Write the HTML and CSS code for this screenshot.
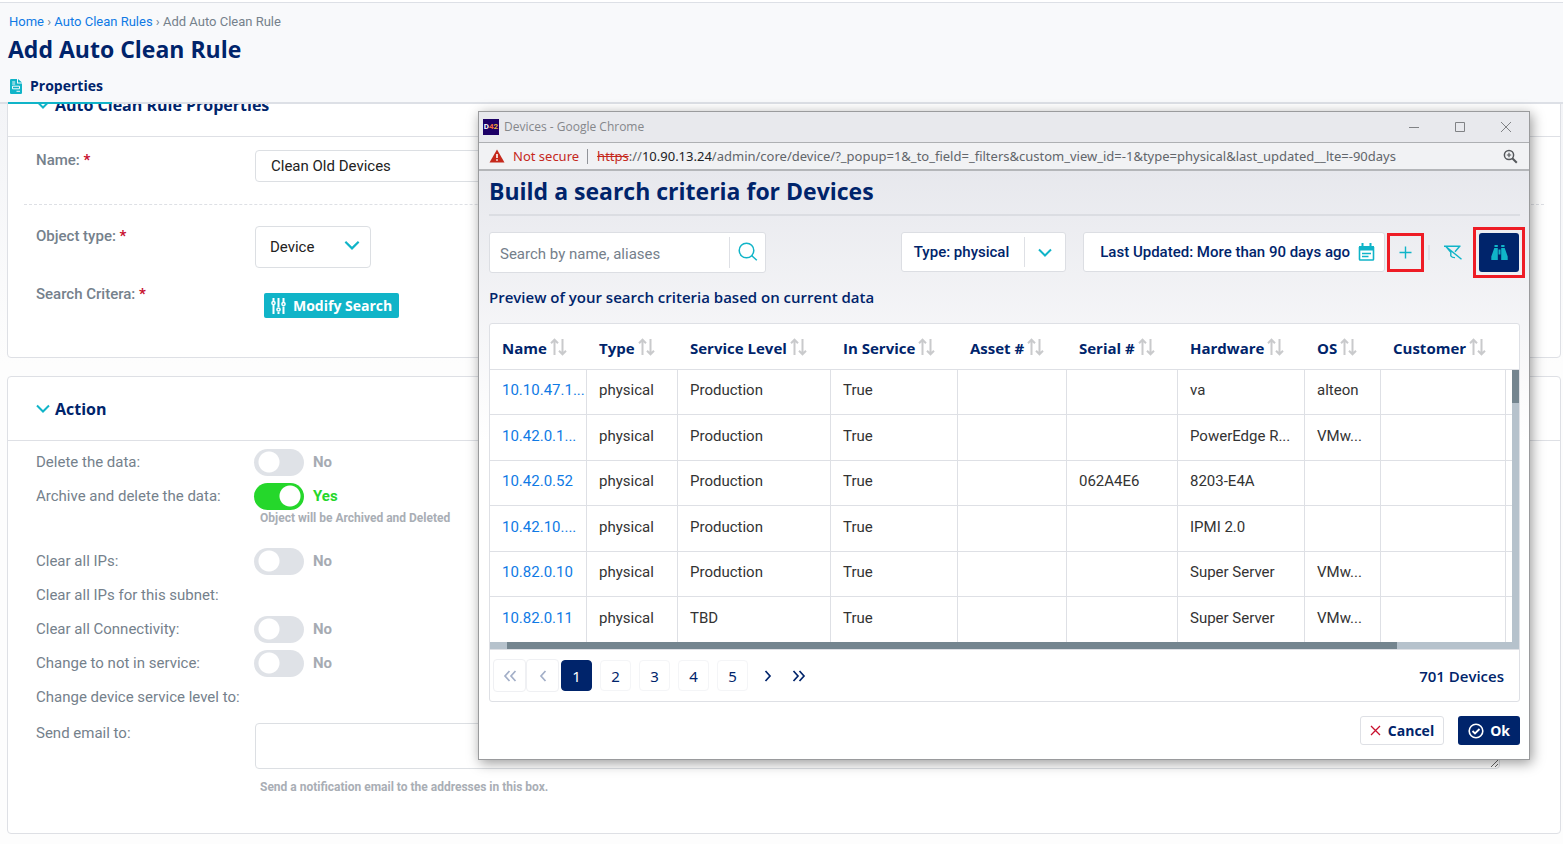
FILE: index.html
```html
<!DOCTYPE html>
<html lang="en">
<head>
<meta charset="utf-8">
<title>Add Auto Clean Rule</title>
<link rel="stylesheet" href="styles.css">
</head>
<body>
<svg class="sprite" aria-hidden="true">
  <symbol id="sort" viewBox="0 0 18 18"><path d="M4.500 17V2M1 5.200l3.500-3.500L8 5.200M12.500 1v15M9 12.800l3.500 3.500 3.500-3.500" fill="none" stroke="currentColor" stroke-width="2"/></symbol>
  <symbol id="chev" viewBox="0 0 14 9"><path d="M1 1.500l6 6 6-6" fill="none" stroke="currentColor" stroke-width="2"/></symbol>
</svg>
<header class="top">
  <nav class="crumbs"><a href="#">Home</a> › <a href="#">Auto Clean Rules</a> › Add Auto Clean Rule</nav>
  <h1>Add Auto Clean Rule</h1>
  <a class="tab" href="#">
    <svg width="12" height="15" viewBox="0 0 12 15"><path d="M1.200 0H7v4.500h5V14q0 1-1.200 1H1.200Q0 15 0 14V1q0-1 1.200-1zM8 0l4 3.600H8z" fill="#10b4c8"/><path d="M2.200 3h3M2.200 5h3M2.500 7.200h7v2.600h-7zM6.500 12.300h3.500" fill="none" stroke="#f8f9fb"/></svg>
    Properties</a>
</header>
<main class="page">
  <section class="card first">
    <h2><svg class="chev" width="14" height="9"><use href="#chev"/></svg>Auto Clean Rule Properties</h2>
    <div class="props">
      <div class="field name">
        <label class="strong" for="name">Name: <b>*</b></label>
        <input id="name" class="box" type="text" value="Clean Old Devices">
      </div>
      <div class="field object">
        <label class="strong" for="otype">Object type: <b>*</b></label>
        <div class="select"><select id="otype" class="box"><option>Device</option></select><svg class="chev" width="16" height="10" viewBox="0 0 14 9"><use href="#chev"/></svg></div>
      </div>
      <div class="field search">
        <span class="strong">Search Critera: <b>*</b></span>
        <button class="modify" type="button"><svg width="15" height="16" viewBox="0 0 15 16" fill="none" stroke="#fff" stroke-width="2"><path d="M2.500 0v3M2.500 7v9M7.500 0v9M7.500 14v2M12.500 0v4M12.500 8.500V16"/><circle cx="2.500" cy="5" r="1.600" stroke-width="1.500"/><circle cx="7.500" cy="11.500" r="1.600" stroke-width="1.500"/><circle cx="12.500" cy="6" r="1.600" stroke-width="1.500"/></svg>Modify Search</button>
      </div>
    </div>
  </section>
  <section class="card">
    <h2><svg class="chev" width="14" height="9"><use href="#chev"/></svg>Action</h2>
    <div class="actions">
      <div class="row"><label for="a1">Delete the data:</label><span class="switch"><input type="checkbox" id="a1">No</span></div>
      <div class="row"><label for="a2">Archive and delete the data:</label><span class="switch on"><input type="checkbox" id="a2" checked>Yes</span></div>
      <p class="help near">Object will be Archived and Deleted</p>
      <div class="row"><label for="a3">Clear all IPs:</label><span class="switch"><input type="checkbox" id="a3">No</span></div>
      <div class="row"><span>Clear all IPs for this subnet:</span></div>
      <div class="row"><label for="a4">Clear all Connectivity:</label><span class="switch"><input type="checkbox" id="a4">No</span></div>
      <div class="row"><label for="a5">Change to not in service:</label><span class="switch"><input type="checkbox" id="a5">No</span></div>
      <div class="row"><span>Change device service level to:</span></div>
      <div class="row mail"><label for="mail">Send email to:</label><textarea id="mail" class="box"></textarea></div>
      <p class="help">Send a notification email to the addresses in this box.</p>
    </div>
  </section>
</main>

<section class="popup" aria-label="Devices">
  <div class="titlebar">
    <span class="fav">D<i>4</i><em>2</em></span>
    <span class="wname">Devices - Google Chrome</span>
    <button type="button" aria-label="Minimize"><svg width="12" height="12" viewBox="0 0 12 12"><path d="M1 6.500h10"/></svg></button>
    <button type="button" aria-label="Maximize"><svg width="12" height="12" viewBox="0 0 12 12"><path d="M1.500 1.500h9v9h-9z"/></svg></button>
    <button type="button" aria-label="Close"><svg width="12" height="12" viewBox="0 0 12 12"><path d="M1 1l10 10M11 1L1 11"/></svg></button>
  </div>
  <div class="urlbar">
    <svg width="16" height="14" viewBox="0 0 16 14"><path d="M8 0.500L15.500 13.500H0.500z" fill="#c5291c"/><path d="M8 5v4M8 10.200v1.600" stroke="#fff" stroke-width="1.600"/></svg>
    <span class="insecure">Not secure</span>
    <span class="url"><s>https</s>://<b>10.90.13.24</b>/admin/core/device/?_popup=1&amp;_to_field=_filters&amp;custom_view_id=-1&amp;type=physical&amp;last_updated__lte=-90days</span>
    <svg width="15" height="15" viewBox="0 0 15 15" fill="none" stroke="#55585c"><circle cx="6" cy="6" r="4.600" stroke-width="1.500"/><path d="M9.300 9.300l4.500 4.500" stroke-width="2"/><path d="M3.800 6h4.400M6 3.800v4.400" stroke-width="1.200"/></svg>
  </div>
  <div class="content">
    <h1>Build a search criteria for Devices</h1>
    <div class="tools">
      <div class="finder">
        <input type="text" aria-label="Search" placeholder="Search by name, aliases">
        <button type="button" aria-label="Search"><svg width="20" height="20" viewBox="0 0 20 20" fill="none" stroke="#10b4c8" stroke-width="1.500"><circle cx="8.500" cy="8.500" r="7.300"/><path d="M13.800 13.800l5 4.500"/></svg></button>
      </div>
      <button class="filter type" type="button"><span>Type: physical</span><svg class="chev" width="14" height="9"><use href="#chev"/></svg></button>
      <button class="filter" type="button">Last Updated: More than 90 days ago
        <svg width="17" height="18" viewBox="0 0 17 18"><path d="M1 3h15v4.500H1z" fill="#10b4c8"/><path d="M4.500 0v4M12.500 0v4" stroke="#10b4c8" stroke-width="2"/><path d="M1.500 4v12.200q0 .8.800.8h12.400q.8 0 .8-.8V4M4 10.500h9M4 13.500h6.500" fill="none" stroke="#10b4c8" stroke-width="1.600"/></svg></button>
      <button class="plain mark" type="button" aria-label="Add filter"><svg width="13" height="13" viewBox="0 0 13 13"><path d="M6.500 0.500v12M0.500 6.500h12" stroke="#10b4c8" stroke-width="1.400"/></svg></button>
      <span class="sep"></span>
      <button class="plain clear" type="button" aria-label="Clear filters"><svg width="18" height="15" viewBox="0 0 18 15" fill="none" stroke="#10b4c8" stroke-width="1.400"><path d="M0 1.200h16.500M2 1.500l4.800 5.700v3.600q1.500 2 4.200 1.800M15.500 1.500l-4.500 5.300M1.500 1.200l16 13"/></svg></button>
      <span class="mark go"><button type="button" aria-label="Run search"><svg width="17" height="15" viewBox="0 0 17 15" fill="#10b4c8"><path d="M3.500 0h3.300v2H3.500zM10.200 0h3.300v2h-3.300zM3.300 3h3.500v12H0.300v-3.500zM13.700 3h-3.500v12h6.500v-3.500zM7.500 4.500h2v5h-2z"/></svg></button></span>
    </div>
    <h3>Preview of your search criteria based on current data</h3>
    <div class="panel">
      <div class="grid">
        <table>
          <colgroup><col class="c97"><col class="c91"><col class="c153"><col class="c127"><col class="c109"><col class="c111"><col class="c127"><col class="c76"><col><col class="c6"></colgroup>
          <thead><tr><th>Name<svg class="sort"><use href="#sort"/></svg></th><th>Type<svg class="sort"><use href="#sort"/></svg></th><th>Service Level<svg class="sort"><use href="#sort"/></svg></th><th>In Service<svg class="sort"><use href="#sort"/></svg></th><th>Asset #<svg class="sort"><use href="#sort"/></svg></th><th>Serial #<svg class="sort"><use href="#sort"/></svg></th><th>Hardware<svg class="sort"><use href="#sort"/></svg></th><th>OS<svg class="sort"><use href="#sort"/></svg></th><th>Customer<svg class="sort"><use href="#sort"/></svg></th><th></th></tr></thead>
          <tbody>
            <tr><td><a href="#">10.10.47.1...</a></td><td>physical</td><td>Production</td><td>True</td><td></td><td></td><td>va</td><td>alteon</td><td></td><td></td></tr>
            <tr><td><a href="#">10.42.0.1...</a></td><td>physical</td><td>Production</td><td>True</td><td></td><td></td><td>PowerEdge R...</td><td>VMw...</td><td></td><td></td></tr>
            <tr><td><a href="#">10.42.0.52</a></td><td>physical</td><td>Production</td><td>True</td><td></td><td>062A4E6</td><td>8203-E4A</td><td></td><td></td><td></td></tr>
            <tr><td><a href="#">10.42.10....</a></td><td>physical</td><td>Production</td><td>True</td><td></td><td></td><td>IPMI 2.0</td><td></td><td></td><td></td></tr>
            <tr><td><a href="#">10.82.0.10</a></td><td>physical</td><td>Production</td><td>True</td><td></td><td></td><td>Super Server</td><td>VMw...</td><td></td><td></td></tr>
            <tr><td><a href="#">10.82.0.11</a></td><td>physical</td><td>TBD</td><td>True</td><td></td><td></td><td>Super Server</td><td>VMw...</td><td></td><td></td></tr>
          </tbody>
        </table>
        <div class="vbar"><div class="vtrack"><div class="vthumb"></div></div></div>
      </div>
      <div class="hbar"><div class="hthumb"></div></div>
      <div class="pager">
        <button class="off" type="button" aria-label="First page"><svg width="14" height="12" viewBox="0 0 14 12"><path d="M6.500 1L2 6l4.500 5M12.500 1L8 6l4.500 5"/></svg></button>
        <button class="off" type="button" aria-label="Previous page"><svg width="8" height="12" viewBox="0 0 8 12"><path d="M6.500 1L2 6l4.500 5"/></svg></button>
        <button class="num current" type="button">1</button>
        <button class="num" type="button">2</button>
        <button class="num" type="button">3</button>
        <button class="num" type="button">4</button>
        <button class="num" type="button">5</button>
        <button class="next" type="button" aria-label="Next page"><svg width="8" height="12" viewBox="0 0 8 12"><path d="M1.500 1L6 6l-4.500 5"/></svg></button>
        <button class="next" type="button" aria-label="Last page"><svg width="14" height="12" viewBox="0 0 14 12"><path d="M1.500 1L6 6l-4.500 5M7.500 1L12 6l-4.500 5"/></svg></button>
        <span class="count">701 Devices</span>
      </div>
    </div>
    <div class="buttons">
      <button class="cancel" type="button"><svg width="11" height="11" viewBox="0 0 11 11"><path d="M1 1l9 9M10 1L1 10" stroke="#c8102e" stroke-width="1.300"/></svg>Cancel</button>
      <button class="ok" type="button"><svg width="16" height="16" viewBox="0 0 16 16" fill="none" stroke="#fff"><circle cx="8" cy="8" r="6.800" stroke-width="1.600"/><path d="M4.500 8l2.500 2.500 4.500-4.500" stroke-width="1.800"/></svg>Ok</button>
    </div>
  </div>
</section>
</body>
</html>
```
FILE: styles.css
```css
:root {
  --navy: #00246b;
  --teal: #10b4c8;
  --line: #dee0e5;
  --head: "Open Sans", "Noto Sans", sans-serif;
  --text: Roboto, "Noto Sans", sans-serif;
}
* { box-sizing: border-box; }
body {
  margin: 0;
  min-height: 100vh;
  display: flex;
  flex-direction: column;
  background: #fdfdfd;
  font: 15px/20px var(--text);
  color: #75818c;
  overflow: hidden;
}
button, input, select, textarea { font: inherit; margin: 0; }
button { cursor: pointer; display: inline-flex; align-items: center; justify-content: center; padding: 0; border: 0; background: none; }
a { color: #0f7ae5; text-decoration: none; }
h1, h2, h3, p { margin: 0; }
.sprite { display: none; }
.chev { color: var(--teal); flex: none; }

.top {
  height: 104px;
  padding: 10px 8px 0;
  border-bottom: 2px solid #dde0e6;
  background: linear-gradient(#fff 2px, #dde0e6 2px, #dde0e6 3px, #f8f9fb 3px);
}
.crumbs { font-size: 13px; line-height: 24px; padding-left: 1px; }
h1 { font: 700 23px/30px var(--head); color: var(--navy); }
.tab {
  display: inline-flex;
  align-items: center;
  gap: 8px;
  height: 34px;
  margin-top: 6px;
  padding-left: 2px;
  width: 104px;
  border-bottom: 2px solid var(--teal);
  font: 700 14px/20px var(--head);
  color: var(--navy);
}

.page { flex: 1; overflow: hidden; padding: 0 2px 9px 7px; background: linear-gradient(#f3f4f7, #fdfdfd 260px); }
.card { background: #fff; border: 1px solid var(--line); border-radius: 4px; margin-bottom: 18px; }
.first { margin-top: -32px; }
.card h2 {
  display: flex;
  align-items: center;
  gap: 5px;
  height: 64px;
  padding-left: 28px;
  border-bottom: 1px solid var(--line);
  font: 700 16px/20px var(--head);
  color: var(--navy);
}
.box { border: 1px solid #dcdfe3; border-radius: 4px; background: #fff; color: #222; }
.props { padding: 13px 16px 39px; }
.field { display: grid; grid-template-columns: 219px 1fr; padding: 0 43px 0 12px; align-items: start; }
.strong { font-weight: 500; }
.strong b { color: #c8102e; }
.name { height: 55px; border-bottom: 1px dashed var(--line); }
.name .box { height: 32px; padding: 0 15px; }
.object { padding-top: 21px; }
.select { position: relative; width: 116px; }
.select select { appearance: none; width: 100%; height: 42px; padding: 0 14px; }
.select svg { position: absolute; right: 11px; top: 14px; pointer-events: none; }
.search { padding-top: 16px; }
.modify { justify-self: start; margin: 9px 0 0 9px; height: 25px; padding: 0 7px; gap: 7px; background: var(--teal); border-radius: 2px; color: #fff; font: 700 14px/20px var(--head); }

.actions { padding: 4px 60px 39px 28px; }
.row { display: grid; grid-template-columns: 219px 1fr; min-height: 34px; align-items: center; }
.switch { display: flex; align-items: center; gap: 9px; font-weight: 700; color: #a6abb3; margin-left: -1px; }
.switch.on { color: #25d72b; }
.switch input { appearance: none; width: 50px; height: 27px; border-radius: 14px; background: radial-gradient(circle at 15px 13px, #fff 10px, #dfe2e7 11px); }
.switch input:checked { background: radial-gradient(circle at 36px 13px, #fff 10px, #25d72b 11px); }
.help { margin: 11px 0 0 224px; font-size: 12px; line-height: 14px; font-weight: 700; color: #a9aeb5; }
.help.near { margin: -2px 0 19px 224px; }
.mail { align-items: start; padding-top: 9px; }
.mail .box { height: 46px; width: 100%; resize: both; }

.popup {
  position: absolute;
  left: 478px;
  right: 33px;
  top: 111px;
  border: 1px solid #9a9b9d;
  background: #fff;
  box-shadow: 2px 3px 12px rgba(0, 0, 0, .4);
}
.titlebar { display: flex; align-items: center; height: 31px; padding: 0 17px 0 4px; background: #e8e9ed; border-bottom: 1px solid #aeb0b3; font: 12px/16px "Open Sans", sans-serif; color: #85878b; }
.titlebar svg { fill: none; stroke: #808285; stroke-width: 1; }
.titlebar button { margin-left: 34px; }
.fav { width: 16px; height: 16px; margin-right: 5px; background: #1c0066; color: #fff; font: 700 8px/16px var(--text); text-align: center; }
.fav i { color: #f26a3d; font-style: normal; }
.fav em { color: #e8b33b; font-style: normal; }
.wname { flex: 1; }
.urlbar { display: flex; align-items: center; height: 28px; padding: 0 11px 0 10px; background: #f1f2f4; border-bottom: 2px solid #b4b6b9; font: 13px/18px "Noto Sans", sans-serif; color: #62666b; }
.insecure { color: #c5291c; margin: 0 9px 0 8px; padding-right: 8px; border-right: 1px solid #919499; line-height: 15px; }
.url { flex: 1; white-space: nowrap; }
.url s { color: #c5291c; }
.url b { font-weight: 400; color: #202124; }

.content { padding: 5px 9px 14px 10px; background: linear-gradient(#e7e8ed, #fff 270px); }
.content h1 { height: 40px; line-height: 30px; border-bottom: 2px solid #dbdde2; }
.tools { display: flex; align-items: center; height: 72px; }
.finder { display: flex; align-items: center; width: 277px; height: 41px; background: #fff; border: 1px solid #dcdee3; border-radius: 3px; margin-right: auto; }
.finder input { width: 240px; height: 31px; border: 0; border-right: 1px solid var(--line); padding: 3px 10px 0; outline: 0; background: none; }
.finder input::placeholder { color: #75808b; }
.finder button { flex: 1; }
.filter { height: 40px; gap: 8px; padding: 0 9px 0 16px; background: #fff; border: 1px solid #dcdee3; border-radius: 3px; font-weight: 500; color: var(--navy); }
.type { margin-right: 17px; padding: 0 13px 0 12px; gap: 13px; }
.type span { line-height: 30px; padding-right: 15px; border-right: 1px solid var(--line); }
.mark { border: 3px solid #ee1c25; }
.plain.mark { width: 37px; height: 39px; margin-left: 2px; }
.sep { width: 2px; height: 15px; margin: 0 14px 0 4px; background: #dfe1e7; }
.clear { margin-right: 11px; }
.go { padding: 3px; margin-right: -5px; }
.go button { width: 40px; height: 39px; display: flex; background: var(--navy); border-radius: 3px; margin: 0; }
.content h3 { font: 600 15px/18px var(--head); color: var(--navy); }

.panel { margin-top: 17px; background: #fff; border: 1px solid var(--line); border-radius: 3px; }
.grid { display: flex; }
table { flex: 1; table-layout: fixed; border-collapse: separate; border-spacing: 0; min-width: 0; width: 100%; }
.c97 { width: 97px; } .c91 { width: 91px; } .c153 { width: 153px; } .c127 { width: 127px; }
.c109 { width: 109px; } .c111 { width: 111px; } .c76 { width: 76px; } .c6 { width: 6px; }
th { height: 46px; padding: 2px 0 0 12px; text-align: left; font: 700 15px/20px var(--head); color: var(--navy); border-bottom: 1px solid var(--line); white-space: nowrap; }
td { height: 45px; padding: 0 0 4px 12px; border: solid var(--line); border-width: 0 1px 1px 0; color: #333; white-space: nowrap; }
tbody tr:nth-child(even) td { height: 46px; }
td:last-child { border-right: 0; }
tbody tr:last-child td { height: 45px; border-bottom: 0; }
th:last-child, td:last-child { padding: 0; }
.sort { width: 18px; height: 18px; margin-left: 3px; vertical-align: -2px; color: #c9cacc; }
.vbar { display: flex; flex-direction: column; width: 7px; padding-top: 45px; }
.vtrack { flex: 1; background: #b6c2cc; border-top: 1px solid var(--line); }
.vthumb { height: 33px; background: #74858f; }
.hbar { height: 8px; background: #b6c2cc; border-bottom: 1px solid var(--line); }
.hthumb { width: 86.5%; height: 7px; margin-left: 17px; background: #74858f; }
.pager { display: flex; align-items: center; height: 51px; padding: 0 15px 0 3px; }
.pager svg { fill: none; stroke: currentColor; stroke-width: 1.700; }
.off { width: 33px; height: 33px; border: 1px solid #eff0f3; border-radius: 4px; color: #a3afc8; }
.num { width: 31px; height: 31px; margin-right: 8px; border: 1px solid #f4f5f7; border-radius: 4px; color: var(--navy); font: 15px/20px "Noto Sans", sans-serif; }
.current { margin-left: 2px; background: var(--navy); border-color: var(--navy); color: #fff; }
.next { width: 31px; color: var(--navy); }
.num + .next { margin-left: -4px; }
.count { margin-left: auto; font: 600 15px/20px var(--head); color: var(--navy); }
.buttons { display: flex; justify-content: flex-end; gap: 14px; margin-top: 14px; }
.buttons button { height: 29px; border-radius: 3px; font: 700 14px/20px var(--head); }
.cancel { padding: 0 9px; gap: 7px; background: #fff; border: 1px solid var(--line); color: var(--navy); }
.ok { padding: 0 10px; gap: 6px; background: var(--navy); color: #fff; }
```
